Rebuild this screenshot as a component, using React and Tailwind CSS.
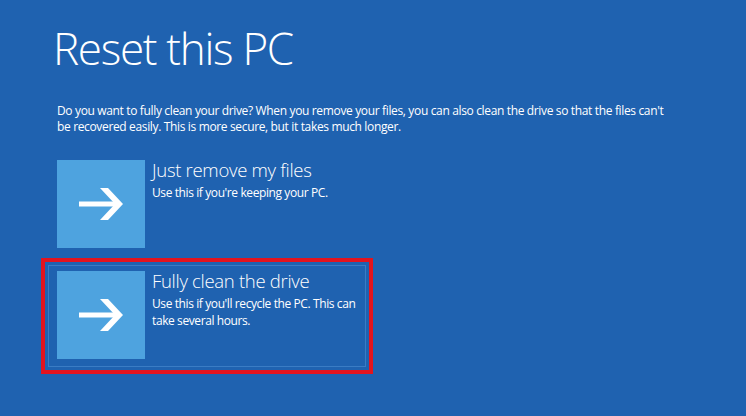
import React from 'react';

const font = { fontFamily: '"Open Sans", "Noto Sans", sans-serif' };

const Arrow = () => (
  <svg width="44" height="32" viewBox="0 0 44 32">
    <rect x="0" y="13.5" width="36" height="5" fill="#fff" />
    <polygon points="21,0 29,0 44,16 29,32 21,32 36,16" fill="#fff" />
  </svg>
);

const Option = ({ title, children }) => (
  <div className="flex items-start">
    <div className="w-[88px] h-[88px] bg-[#4ea3df] flex items-center justify-center shrink-0">
      <Arrow />
    </div>
    <div className="ml-[7px] -mt-[2px] w-[214px]">
      <div className="text-[18.5px] font-light leading-[24px] tracking-[-0.3px]">{title}</div>
      <div className="text-[12px] leading-[17px] mt-[2px] tracking-[-0.4px]">{children}</div>
    </div>
  </div>
);

export default function App() {
  return (
    <div className="w-[746px] h-[416px] bg-[#1f62b0] text-white overflow-hidden" style={font}>
      <div className="pl-[55px] pt-[20px]">
        <h1 className="-ml-[2px] text-[44px] font-light leading-[56px] tracking-[-1.3px]">Reset this PC</h1>
        <p className="mt-[27px] ml-[2px] w-[640px] text-[12px] leading-[16px] tracking-[-0.35px]">
          Do you want to fully clean your drive? When you remove your files, you can also clean the drive so that the files can't
          <br />
          be recovered easily. This is more secure, but it takes much longer.
        </p>

        <div className="mt-[25px] ml-[2px] flex flex-col">
          <Option title="Just remove my files">Use this if you're keeping your PC.</Option>

          <div className="mt-[10px] -ml-[16px] w-[332px] border-4 border-[#e3141e] p-[3px]">
            <div className="border border-[#3a7cc4] pl-[8px] pt-[5px] pb-[7px]">
              <Option title="Fully clean the drive">
                Use this if you'll recycle the PC. This can take several hours.
              </Option>
            </div>
          </div>
        </div>
      </div>
    </div>
  );
}
